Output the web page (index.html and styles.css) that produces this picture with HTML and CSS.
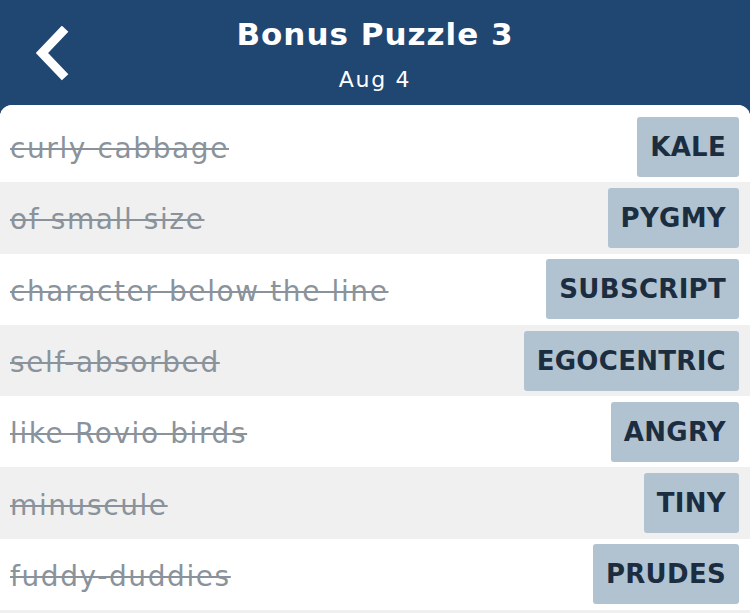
FILE: index.html
```html
<!DOCTYPE html>
<html lang="en">
<head>
<meta charset="utf-8">
<title>Bonus Puzzle 3</title>
<link rel="stylesheet" href="styles.css">
</head>
<body>
<div class="app">
  <header class="topbar">
    <button class="back" aria-label="Back">
      <svg width="40" height="56" viewBox="0 0 40 56"><path d="M30 6 L10 27 L30 48" fill="none" stroke="#fff" stroke-width="9" stroke-linecap="square" stroke-linejoin="miter"/></svg>
    </button>
    <div class="titles">
      <h1 class="title">Bonus Puzzle 3</h1>
      <div class="subtitle">Aug 4</div>
    </div>
  </header>
  <main class="card">
    <ul class="list">
      <li class="row"><span class="clue">curly cabbage</span><span class="answer">KALE</span></li>
      <li class="row"><span class="clue">of small size</span><span class="answer">PYGMY</span></li>
      <li class="row"><span class="clue">character below the line</span><span class="answer">SUBSCRIPT</span></li>
      <li class="row"><span class="clue">self-absorbed</span><span class="answer">EGOCENTRIC</span></li>
      <li class="row"><span class="clue">like Rovio birds</span><span class="answer">ANGRY</span></li>
      <li class="row"><span class="clue">minuscule</span><span class="answer">TINY</span></li>
      <li class="row"><span class="clue">fuddy-duddies</span><span class="answer">PRUDES</span></li>
    </ul>
  </main>
</div>
</body>
</html>
```
FILE: styles.css
```css
* { box-sizing: border-box; }
html, body { margin: 0; padding: 0; }
body {
  background: #204672;
  font-family: "DejaVu Sans", "Open Sans", sans-serif;
}
.app {
  width: 750px;
  height: 613px;
  overflow: hidden;
  display: flex;
  flex-direction: column;
}
.topbar {
  position: relative;
  flex: 0 0 105px;
  background: #204672;
  display: flex;
  justify-content: center;
}
.back {
  position: absolute;
  left: 32px;
  top: 26px;
  padding: 0;
  border: 0;
  background: none;
  display: flex;
}
.titles {
  display: flex;
  flex-direction: column;
  align-items: center;
  padding-top: 12px;
  color: #fff;
}
.title {
  margin: 0;
  font-size: 31px;
  font-weight: 700;
  line-height: 44px;
  letter-spacing: 1px;
}
.subtitle {
  font-size: 22px;
  line-height: 28px;
  margin-top: 10px;
  letter-spacing: 1.7px;
}
.card {
  flex: 1;
  min-height: 0;
  overflow: hidden;
  background: #f0f0f0;
  border-radius: 12px 12px 0 0;
}
.list {
  list-style: none;
  margin: 0;
  padding: 6px 0 0;
  background: #fff;
}
.row {
  height: 71.3px;
  display: flex;
  align-items: center;
  justify-content: space-between;
  padding: 0 11px 0 10px;
  background: #fff;
}
.row:nth-child(even) { background: #f0f0f0; }
.clue {
  padding-top: 4px;
  font-size: 28px;
  color: #8a939b;
  letter-spacing: 1.6px;
  text-decoration: line-through;
  text-decoration-thickness: 2px;
}
.answer {
  height: 60px;
  display: flex;
  align-items: center;
  padding: 0 13px;
  background: #b1c2d1;
  border-radius: 3px;
  color: #1c2d40;
  font-size: 26px;
  font-weight: 700;
  letter-spacing: 0.3px;
}
```
